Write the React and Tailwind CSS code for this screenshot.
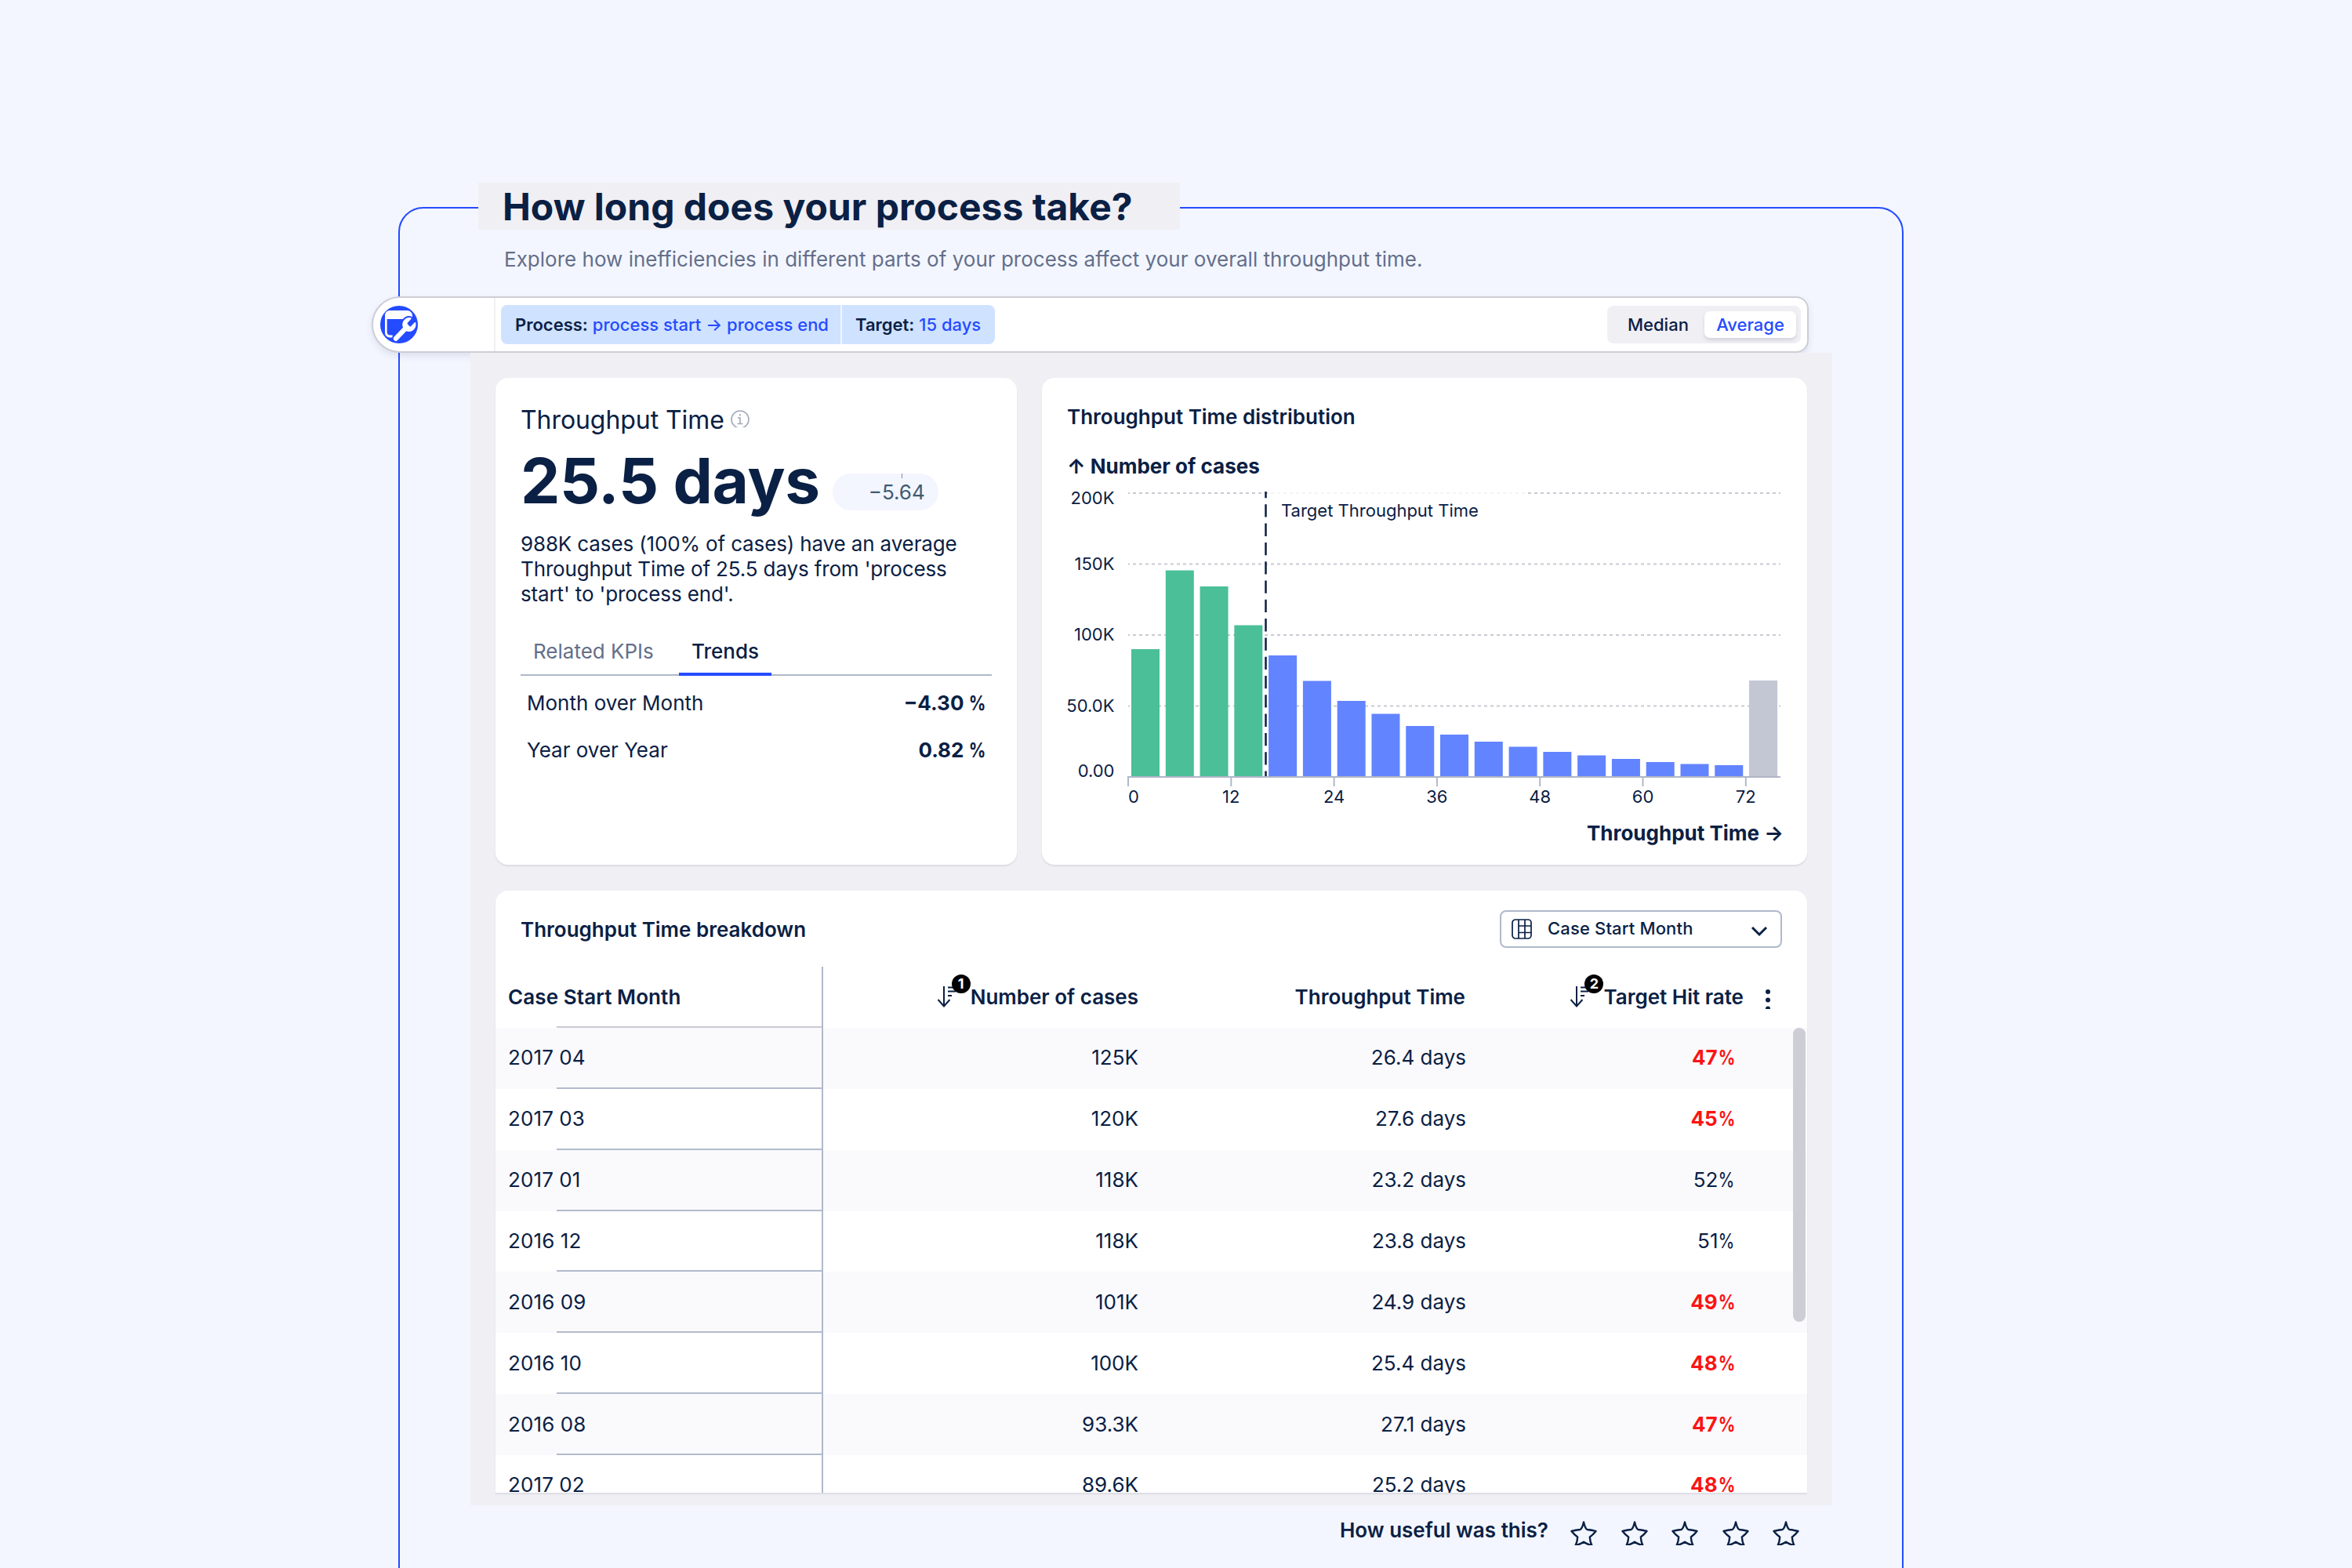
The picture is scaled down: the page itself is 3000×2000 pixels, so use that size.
import React from "react";

const rows = [
  { month: "2017 04", cases: "125K", time: "26.4 days", rate: "47", low: true },
  { month: "2017 03", cases: "120K", time: "27.6 days", rate: "45", low: true },
  { month: "2017 01", cases: "118K", time: "23.2 days", rate: "52", low: false },
  { month: "2016 12", cases: "118K", time: "23.8 days", rate: "51", low: false },
  { month: "2016 09", cases: "101K", time: "24.9 days", rate: "49", low: true },
  { month: "2016 10", cases: "100K", time: "25.4 days", rate: "48", low: true },
  { month: "2016 08", cases: "93.3K", time: "27.1 days", rate: "47", low: true },
  { month: "2017 02", cases: "89.6K", time: "25.2 days", rate: "48", low: true },
];

// bar heights in pixels, 362px = 200K cases
const bars = [
  163, 263.5, 243, 193.5, 155, 122.5, 97, 80.5, 65, 54, 45, 38.5, 32, 27.5, 23,
  19, 16.5, 15, 123,
];

const yLabels = [
  { text: "200K", y: 27 },
  { text: "150K", y: 110.5 },
  { text: "100K", y: 201 },
  { text: "50.0K", y: 291.5 },
  { text: "0.00", y: 374.5 },
];

const Logo = () => (
  <svg width="48" height="48" viewBox="0 0 48 48">
    <circle cx="24" cy="24" r="24" fill="#254bff" />
    <path
      d="M6 12a6 6 0 0 1 6-6h22.500a6.500 6.500 0 0 1 6.500 6.500v4.500H8.700v16.500a4 4 0 0 0 4 4h3v3H12a6 6 0 0 1-6-6z"
      fill="#fff"
    />
    <g transform="translate(14 12) scale(1.43 1.5)">
      <path
        d="M14.7 6.300a1 1 0 0 0 0 1.400l1.600 1.600a1 1 0 0 0 1.400 0l3.106-3.105c.32-.322.863-.22.983.218a6 6 0 0 1-8.259 7.057l-7.910 7.910a1 1 0 0 1-2.999-3l7.910-7.910a6 6 0 0 1 7.057-8.259c.438.12.54.662.219.984z"
        fill="#fff"
        stroke="#254bff"
        strokeWidth="2.600"
        paintOrder="stroke"
      />
    </g>
  </svg>
);

const Star = () => (
  <svg width="34" height="31" viewBox="0 0 34 31" fill="none">
    <path
      d="M17 1.500Q19 10 21.500 11Q27 11.500 32.500 13Q29 17.500 24.800 20.500Q25 26 27.500 31.500Q21 29.500 17 26.800Q13 29.500 6.500 31.500Q9 26 9.200 20.500Q5 17.500 1.500 13Q7 11.500 12.500 11Q15 10 17 1.500Z"
      stroke="#0a2044"
      strokeWidth="2.400"
      strokeLinejoin="round"
    />
  </svg>
);

const SortBadge = ({ number }) => (
  <div className="relative -mt-[12px] h-[40px] w-[42px]">
    <svg className="absolute top-0 left-0" width="42" height="40" viewBox="0 0 42 40" fill="none">
      <path
        d="M8 13v25M0.500 30l7.500 8.500l7.500-8.500M13 14.500h12M13 19.500h10M13 25h5"
        stroke="#0a2044"
        strokeWidth="2"
      />
    </svg>
    <div className="absolute -top-[2px] right-0 flex h-[24px] w-[24px] items-center justify-center rounded-full bg-black text-[18px] leading-[24px] font-bold text-white">
      {number}
    </div>
  </div>
);

const Trend = ({ label, value }) => (
  <div className="flex h-[60px] w-[601px] items-center justify-between px-[8px] text-[26px]">
    <span>{label}</span>
    <span className="font-bold">
      {value} <span className="-ml-[5px] inline-block origin-right scale-x-[0.82]">%</span>
    </span>
  </div>
);

const Histogram = () => (
  <svg width="976" height="424" viewBox="0 0 976 424" fill="#0a2044" fontSize="22">
    {/* grid */}
    {[13, 103.5, 194, 284.500].map((y) => (
      <path key={y} d={`M110 ${y}H942`} stroke="#c9c9d2" strokeWidth="2" strokeDasharray="4 4" strokeDashoffset="2" />
    ))}
    <rect x="288" y="8" width="331" height="44" fill="#fff" opacity="0.8" />

    {/* bars */}
    {bars.map((h, i) => (
      <rect
        key={i}
        x={114 + i * 43.78}
        y={375 - h}
        width="36"
        height={h}
        fill={i < 4 ? "#4abf98" : i === 18 ? "#c3c6d3" : "#6284ff"}
      />
    ))}
    <path d="M285.500 11V375" stroke="#0a2044" strokeWidth="2.500" strokeDasharray="16.300 8" strokeDashoffset="8" />

    {/* axes */}
    <path d="M109 375H942" stroke="#b0b6c6" strokeWidth="2" />
    {[0, 1, 2, 3, 4, 5, 6].map((i) => (
      <g key={i}>
        <path d={`M${110 + i * 131.3} 375v12`} stroke="#afb9cc" strokeWidth="2" />
        <text x={i === 0 ? 117 : 110 + i * 131.3} y="408" textAnchor="middle">
          {i * 12}
        </text>
      </g>
    ))}
    {yLabels.map((l) => (
      <text key={l.text} x="92.500" y={l.y} textAnchor="end">
        {l.text}
      </text>
    ))}
    <text x="305" y="43">Target Throughput Time</text>
  </svg>
);

const App = () => {
  return (
    <div className="h-[2000px] w-[3000px] overflow-hidden bg-[#f3f6ff] pt-[264px] pl-[508px] font-['Inter',sans-serif] text-[#0a2044]">
      <div className="h-[1800px] w-[1920px] rounded-t-[32px] border-2 border-[#254bff]">
        {/* Heading */}
        <div className="-mt-[33px] ml-[100px] flex h-[60px] w-[895px] items-center bg-[#f0eff4] pt-[2px] pl-[31px]">
          <h1 className="text-[48px] font-bold whitespace-nowrap">How long does your process take?</h1>
        </div>
        <p className="ml-[133px] h-[85px] pt-[18px] text-[26px] leading-[40px] tracking-[0.01px] whitespace-nowrap text-[#646f8a]">
          Explore how inefficiencies in different parts of your process affect your overall throughput time.
        </p>

        {/* Toolbar */}
        <div className="-ml-[36px] flex h-[72px] w-[1833px] items-center rounded-l-[36px] rounded-r-[16px] border-2 border-[#cecdd6] bg-white shadow-[0_4px_8px_rgba(60,70,110,0.12)]">
          <div className="flex h-full w-[156px] items-center border-r-2 border-[#f0eff4] pl-[9px]">
            <Logo />
          </div>
          <div className="ml-[7px] flex h-[50px] items-center rounded-[8px] bg-[#cfe2ff] text-[22px] whitespace-nowrap">
            <div className="flex h-full w-[435px] items-center border-r-2 border-[#f3f6ff] pl-[18px]">
              <span className="font-semibold">Process:</span>
              <span className="ml-[6px] font-medium text-[#254bff]">process start → process end</span>
            </div>
            <div className="flex h-full w-[195px] items-center pl-[17px]">
              <span className="font-semibold">Target:</span>
              <span className="ml-[6px] font-medium text-[#254bff]">15 days</span>
            </div>
          </div>
          <div className="mr-[8px] ml-auto flex h-[48px] w-[247px] items-center rounded-[8px] bg-[#f0eff4] text-[22px]">
            <div className="w-[124px] pl-[26px] font-medium">Median</div>
            <div className="flex h-[34px] w-[117px] items-center justify-center rounded-[7px] bg-white font-medium text-[#254bff] shadow-[0_3px_4px_rgba(60,60,90,0.15)]">
              Average
            </div>
          </div>
        </div>

        <div className="ml-[90px] flex h-[1470px] w-[1737px] flex-col gap-[33px] bg-[#f0eff4] pt-[32px] pl-[32px]">
          <div className="flex h-[621px] gap-[32px]">
            {/* KPI card */}
            <div className="w-[665px] rounded-[16px] bg-white px-[32px] pt-[34px] shadow-[0_2px_2px_#dcdce4]">
              <div className="flex h-[40px] items-center text-[32px] tracking-[-0.07px] whitespace-nowrap">
                Throughput Time
                <svg className="mb-[4px] ml-[8px]" width="24" height="22" viewBox="0 0 24 22" fill="none" stroke="#a3a9b9" strokeWidth="1.600">
                  <circle cx="12" cy="12" r="11" />
                  <path d="M9 10h3v7.500M8.500 17.500h7M12 5v2.500" />
                </svg>
              </div>
              <div className="flex h-[113px] items-center whitespace-nowrap">
                <div className="text-[80px] leading-[112px] font-bold tracking-[-0.3px]">25.5 days</div>
                <div className="relative mt-[30px] ml-[16px] flex h-[47px] w-[135px] items-center justify-end rounded-full bg-[#f3f6ff] pr-[17px] text-[26px] text-[#3f5c73]">
                  <div className="absolute top-0 right-[46px] h-[6px] w-[1px] bg-[#7d8ba0]" />
                  −5.64
                </div>
              </div>
              <p className="mt-[9px] text-[26px] leading-[32px] tracking-[-0.14px] whitespace-nowrap">
                988K cases (100% of cases) have an average
                <br />
                Throughput Time of 25.5 days from 'process
                <br />
                start' to 'process end'.
              </p>
              <div className="mt-[28px] mb-[4px] flex h-[60px] w-[601px] border-b-2 border-[#afb9cc] text-[26px]">
                <div className="flex h-full w-[202px] items-center pb-[2px] pl-[16px] text-[#646f8a]">Related KPIs</div>
                <div className="flex h-[60px] w-[118px] items-center justify-center border-b-4 border-[#254bff] font-medium">Trends</div>
              </div>
              <Trend label="Month over Month" value="−4.30" />
              <Trend label="Year over Year" value="0.82" />
            </div>

            {/* Distribution card */}
            <div className="w-[976px] rounded-[16px] bg-white pt-[30px] shadow-[0_2px_2px_#dcdce4]">
              <h2 className="h-[40px] pl-[32px] text-[26px] leading-[40px] font-semibold">Throughput Time distribution</h2>
              <div className="mt-[22px] flex h-[42px] items-center pb-[1px] pl-[32px] text-[26px] font-bold">↑ Number of cases</div>
              <Histogram />
              <div className="flex h-[44px] items-center justify-end pr-[30px] text-[26px] font-bold">Throughput Time →</div>
            </div>
          </div>

          {/* Breakdown table */}
          <div className="h-[768px] w-[1673px] rounded-t-[16px] bg-white shadow-[0_2px_2px_#dcdce4]">
            <div className="flex h-[97px] items-center justify-between pr-[32px] pl-[32px]">
              <h2 className="pt-[2px] text-[26px] font-semibold">Throughput Time breakdown</h2>
              <div className="flex h-[48px] w-[360px] items-center rounded-[8px] border-2 border-[#afb9cc] pl-[13px] text-[22px] font-medium">
                <svg width="26" height="26" viewBox="0 0 26 26" fill="none" stroke="#0a2044" strokeWidth="1.700">
                  <rect x="1" y="1" width="24" height="24" rx="4" />
                  <path d="M9 1v24M17 1v24M9 9h16M9 17.500h16" />
                </svg>
                <span className="ml-[20px] tracking-[0.15px]">Case Start Month</span>
                <svg className="mt-[6px] mr-[16px] ml-auto" width="22" height="14" viewBox="0 0 22 14" fill="none" stroke="#0a2044" strokeWidth="3">
                  <path d="M2 2l9 9l9-9" />
                </svg>
              </div>
            </div>

            <div className="relative h-[671px] overflow-hidden">
              <div className="grid h-[78px] grid-cols-[418px_402px_417px_436px] text-[26px] font-semibold whitespace-nowrap">
                <div className="flex flex-col border-r-2 border-[#afb9cc]">
                  <div className="flex flex-1 items-center pl-[16px] tracking-[0.1px]">Case Start Month</div>
                  <div className="ml-[78px] h-[2px] bg-[#cbcbd4]" />
                </div>
                <div className="flex items-center justify-end pb-[2px]">
                  <SortBadge number="1" />
                  Number of cases
                </div>
                <div className="flex items-center justify-end pb-[2px]">Throughput Time</div>
                <div className="flex items-center justify-end pr-[46px] pb-[2px]">
                  <SortBadge number="2" />
                  Target Hit rate
                  <svg className="mt-[6px] ml-[27px]" width="8" height="25" viewBox="0 0 8 25" fill="#0a2044">
                    <circle cx="4" cy="3" r="3" />
                    <circle cx="4" cy="13.500" r="3" />
                    <circle cx="4" cy="24.500" r="3" />
                  </svg>
                </div>
              </div>
              {rows.map((row, i) => (
                <div
                  key={row.month}
                  className={`grid h-[77.86px] grid-cols-[418px_402px_418px_435px] text-[26px] whitespace-nowrap ${
                    i % 2 === 0 ? "bg-[#fafafc]" : "bg-white"
                  }`}
                >
                  <div className="flex flex-col border-r-2 border-[#afb9cc]">
                    <div className="flex flex-1 items-center pl-[16px] tracking-[0.1px]">{row.month}</div>
                    <div className="ml-[78px] h-[2px] bg-[#b3bacd]" />
                  </div>
                  <div className="flex items-center justify-end pb-[2px]">{row.cases}</div>
                  <div className="flex items-center justify-end pb-[2px]">{row.time}</div>
                  <div
                    className={`flex items-center justify-end pr-[92px] pb-[2px] ${row.low ? "font-bold text-[#fb1414]" : ""}`}
                  >
                    {row.rate}
                    <span className="-ml-[4px] origin-right scale-x-[0.82]">%</span>
                  </div>
                </div>
              ))}
              <div className="absolute top-[78px] right-[2px] h-[375px] w-[16px] rounded-full bg-[#cdcdd6]" />
            </div>
          </div>
        </div>

        {/* Feedback */}
        <div className="flex h-[80px] w-[1785px] items-start justify-end pt-[20px]">
          <span className="-mt-[1px] mr-[28px] h-[26px] text-[26px] leading-[26px] font-semibold whitespace-nowrap">How useful was this?</span>
          <div className="flex gap-[30.5px]">
            {[1, 2, 3, 4, 5].map((n) => (
              <Star key={n} />
            ))}
          </div>
        </div>
      </div>
    </div>
  );
};

export default App;
